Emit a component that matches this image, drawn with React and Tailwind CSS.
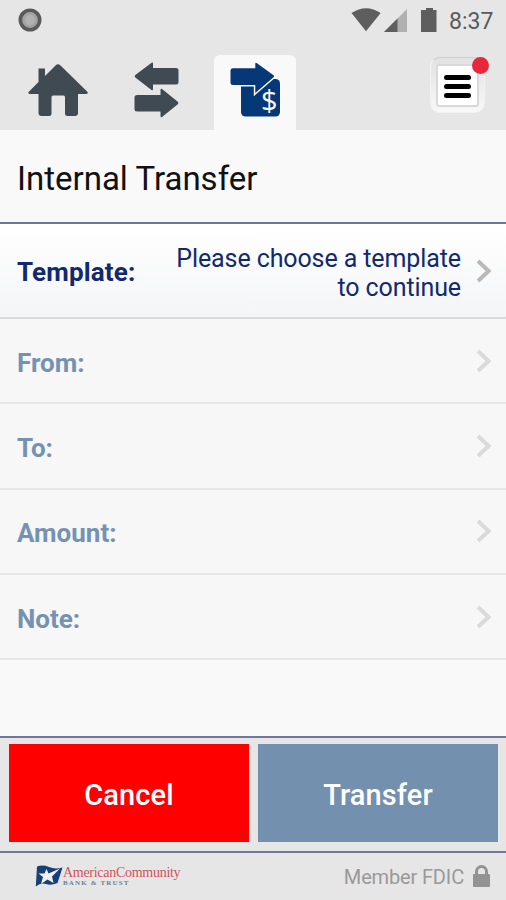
const FIELDS = ["From:", "To:", "Amount:", "Note:"];

function HomeIcon() {
  return (
    <svg className="ml-[28px] mt-[9px] h-[53px] w-[60px]" viewBox="0 0 60 53" fill="#3f4a53">
      <path d="M27.5 1.5Q30 -.8 32.5 1.5L59.6 28Q60.3 30 58 30H50V49Q50 52 47 52H39.5Q37 52 37 49.5V33Q37 31.5 35.5 31.5H25Q23.5 31.5 23.5 33V49.5Q23.5 52 21 52H13.5Q10.5 52 10.5 49V30H2Q-.2 30 .6 28L10.5 18V4.5H17V12Z" />
    </svg>
  );
}

function ArrowsIcon() {
  return (
    <svg className="ml-[46px] mt-[7px] h-[56px] w-[46px]" viewBox="0 0 46 56" fill="#3f4a53">
      <path d="M18 .5Q19 0 19 1.5V6H42Q44.5 6 44.5 8.5V20Q44.5 22.5 42 22.5H19V27Q19 29 17.5 28L1.3 15.5Q0 14.2 1.3 13Z" />
      <path d="M28 27Q26.5 26 26.5 28V33H3Q.5 33 .5 35.5V47Q.5 49.5 3 49.5H26.5V54Q26.5 56 28 55L43.8 42.3Q45.2 41 43.8 39.7Z" />
    </svg>
  );
}

function TransferIcon() {
  return (
    <svg className="h-[56px] w-[52px]" viewBox="0 0 52 56" fill="#053876">
      <rect x="11" y="17" width="39" height="37.5" rx="4.5" />
      <path
        d="M27 1.2Q25.3 0 25.3 2V6.3H3Q.5 6.3 .5 8.8V20.5Q.5 23 3 23H25.3V31L43.5 15.2Q44.6 14.2 43.5 13.2Z"
        stroke="#f9f9f9"
        strokeWidth="3"
        paintOrder="stroke"
      />
      <text x="39.3" y="48.5" textAnchor="middle" fontFamily="Open Sans, sans-serif" fontSize="29" fill="#f9f9f9">
        $
      </text>
    </svg>
  );
}

function Chevron({ className }) {
  return (
    <svg className={`h-[24px] w-[16px] shrink-0 ${className}`} viewBox="0 0 16 24" fill="none" stroke="currentColor" strokeWidth="4">
      <path d="M2 2L12.6 12L2 22" />
    </svg>
  );
}

function StatusBar() {
  return (
    <div className="flex h-[40px] items-center bg-[#e6e6e6]">
      <svg className="ml-[18px] h-[24px] w-[24px]" viewBox="0 0 24 24">
        <circle cx="12" cy="12" r="9.7" fill="#a3a3a3" stroke="#5a5a5a" strokeWidth="3.6" />
        <circle cx="12" cy="12" r="5" fill="#b2b2b2" />
      </svg>
      <svg className="ml-auto h-[24px] w-[87px]" viewBox="0 0 87 24" fill="#5e5e5e">
        <path d="M.5 5Q15 -4.5 29.7 5L15 23.3Z" />
        <path d="M56 1V24H33Z" fill="#b0b0b0" />
        <path d="M46.5 10.5V24H33Z" />
        <path d="M75 2V0H82V2H85.5V24H70V2Z" />
      </svg>
      <span className="ml-[11px] mr-[12px] w-[45px] pt-[4px] text-[23px] leading-[32px] text-[#5a5a5a]">8:37</span>
    </div>
  );
}

function TabBar() {
  return (
    <div className="flex h-[90px] items-start bg-[#e6e6e6] pt-[15px]">
      <HomeIcon />
      <ArrowsIcon />
      <div className="ml-[34px] h-[75px] w-[82px] rounded-t-[6px] bg-[#f9f9f9] pl-[16px] pt-[7px]">
        <TransferIcon />
      </div>
      <button className="relative ml-auto mr-[21px] mt-[2px] flex h-[56px] w-[55px] items-center justify-center rounded-[10px] border border-[#f2f2f2] border-t-[#cfcfcf] bg-linear-to-b from-[#e2e2e2] to-[#f8f8f8]">
        <span className="flex h-[43px] w-[43px] flex-col items-center justify-center gap-[4px] rounded-[3px] border-2 border-[#d9d9d9] bg-white pt-[2px]">
          <span className="h-[5px] w-[27px] rounded-full bg-black" />
          <span className="h-[5px] w-[27px] rounded-full bg-black" />
          <span className="h-[5px] w-[27px] rounded-full bg-black" />
        </span>
        <span className="absolute -right-[5px] -top-[1px] h-[17px] w-[17px] rounded-full bg-[#e8273b]" />
      </button>
    </div>
  );
}

function BankLogo() {
  return (
    <div className="flex items-start">
      <svg className="h-[22px] w-[28px]" viewBox="0 0 28 22">
        <path d="M2 1.5Q8 -.5 14 2T27.5 2.5L22.5 18Q16 21 11 19T.8 21.5Z" fill="#173f79" />
        <path d="M11.5 4L13.5 8.5L25 3.5L17 11.5L18.5 18L12.5 14.5L6 19L8 12L3.5 8.5H9.5Z" fill="#f2f2f2" />
      </svg>
      <div className="pt-[1px] font-['Liberation_Serif',serif]">
        <div className="text-[14px] leading-[14px] tracking-[-0.28px] text-[#cf5260]">AmericanCommunity</div>
        <div className="text-[7px] font-bold leading-[6px] tracking-[1.15px] text-[#6d7c9b]">BANK &amp; TRUST</div>
      </div>
    </div>
  );
}

export default function App() {
  return (
    <div className="flex h-[900px] w-[506px] flex-col overflow-hidden bg-[#f9f9f9] font-[Roboto,sans-serif]">
      <StatusBar />
      <TabBar />

      <h1 className="h-[94px] border-b-2 border-[#6b7698] pl-[17px] text-[33px] leading-[98px] text-[#111]">
        Internal Transfer
      </h1>

      <div className="flex h-[95px] items-center border-b-2 border-[#d9dadb] bg-linear-to-b from-white to-[#f4f5f7] pl-[17px] pr-[14px] text-[#12296f]">
        <span className="pt-[3px] text-[26px] font-bold tracking-[0.15px]">Template:</span>
        <span className="ml-auto w-[300px] pt-[4px] text-right text-[25px] leading-[29px] tracking-[-0.1px]">
          Please choose a template to continue
        </span>
        <Chevron className="ml-[15px] text-[#b9b9b9]" />
      </div>

      {FIELDS.map((label) => (
        <div
          key={label}
          className="flex h-[85.3px] items-center justify-between border-b-2 border-[#e5e6e7] bg-[#f7f7f7] pl-[17px] pr-[14px] text-[#7592b3]"
        >
          <span className="pt-[5px] text-[26px] font-bold">{label}</span>
          <Chevron className="text-[#dadada]" />
        </div>
      ))}

      <div className="mt-auto flex h-[117px] gap-[9px] border-y-2 border-[#73759a] bg-[#e6e6e6] pl-[9px] pt-[6px] text-[29px] font-medium text-white">
        <button className="h-[98px] w-[240px] bg-[#fe0000] pt-[6px] tracking-[0.1px]">Cancel</button>
        <button className="h-[98px] w-[240px] bg-[#7390af] pt-[6px] tracking-[0.1px]">Transfer</button>
      </div>

      <footer className="flex h-[47px] items-start justify-between bg-[#e6e6e6] pl-[35px] pr-[16px] pt-[12px]">
        <BankLogo />
        <div className="flex items-start text-[20px] leading-[24px] tracking-[-0.15px] text-[#999]">
          Member FDIC
          <svg className="ml-[9px] h-[22px] w-[17px]" viewBox="0 0 17 22">
            <path d="M3.5 10V6.5a5 5 0 0 1 10 0V10" fill="none" stroke="#939393" strokeWidth="3" />
            <rect y="9" width="17" height="13" rx="1" fill="#939393" />
          </svg>
        </div>
      </footer>
    </div>
  );
}
